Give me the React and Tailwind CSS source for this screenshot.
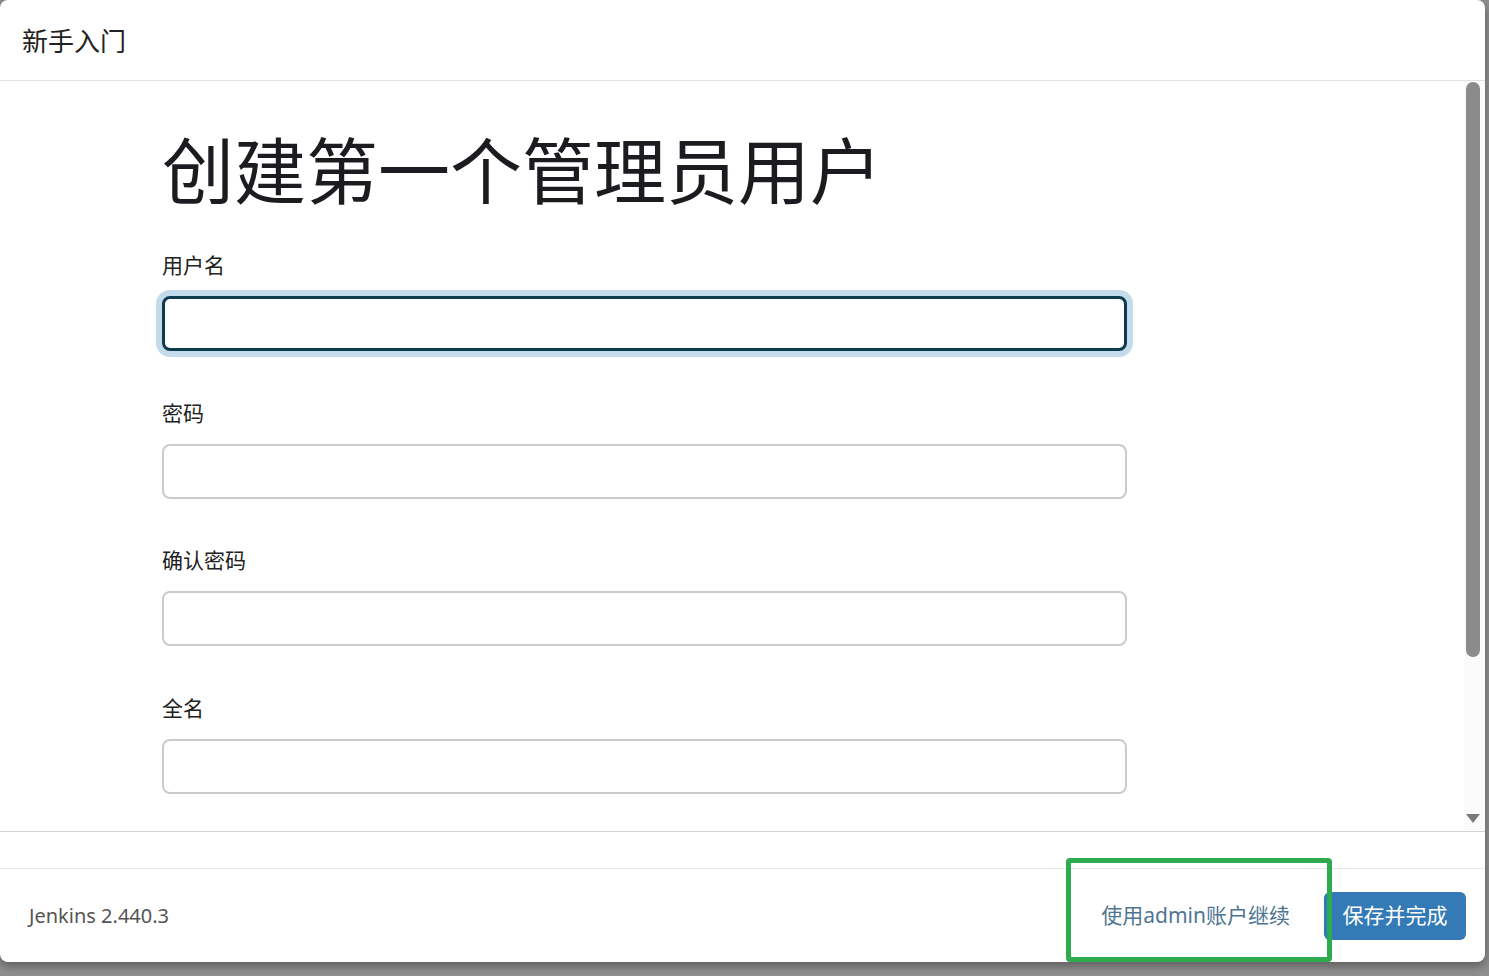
const font = { fontFamily: '"Noto Sans", "Noto Sans CJK SC", sans-serif' };

const Field = ({ label, focused }) => (
  <div className="flex flex-col">
    <label className="h-[28px] text-[21px] leading-[28px] text-[#222]">{label}</label>
    <input
      className={
        focused
          ? 'mt-[17px] h-[55px] w-[965px] rounded-lg border-[3px] border-[#0f3b4e] bg-white shadow-[0_0_0_6px_#c3dbea] outline-none'
          : 'mt-[17px] h-[55px] w-[965px] rounded-lg border-2 border-[#c9cbcc] bg-white outline-none'
      }
    />
  </div>
);

export default function App() {
  return (
    <div className="h-[976px] w-[1489px] overflow-hidden bg-[#8e8e8e]" style={font}>
      <div className="relative flex h-[962px] w-[1485px] flex-col rounded-lg bg-white shadow-[0_4px_10px_rgba(0,0,0,0.35)]">
        <div className="flex h-[81px] shrink-0 items-center border-b border-[#e3e3e3] px-[22px] pt-[3px] text-[26px] text-[#222]">
          新手入门
        </div>

        <div className="flex h-[751px] shrink-0 border-b border-[#d2d2d2]">
          <div className="flex-1 overflow-hidden pl-[162px] pt-[49px]">
            <h1 className="h-[80px] text-[72px] leading-[80px] text-[#1b1b20]">创建第一个管理员用户</h1>
            <div className="mt-[41px] flex flex-col gap-[47.5px]">
              <Field label="用户名" focused />
              <Field label="密码" />
              <Field label="确认密码" />
              <Field label="全名" />
            </div>
          </div>
          <div className="flex w-[21px] flex-col items-center bg-[#fbfbfb] pt-px pb-[8px] pr-[4px]">
            <div className="h-[575px] w-[14px] rounded-full bg-[#8b8b8b]" />
            <div className="flex-1" />
            <svg width="14" height="9" viewBox="0 0 14 9">
              <path d="M0 0 H14 L7 9 Z" fill="#7a7a7a" />
            </svg>
          </div>
        </div>

        <div className="h-[37px] shrink-0 border-b border-[#e6e6e6]" />

        <div className="flex flex-1 items-center justify-between pl-[29px] pr-[19px]">
          <span className="text-[20px] text-[#555]">Jenkins 2.440.3</span>
          <div className="flex items-center gap-[34px]">
            <span className="text-[21px] text-[#4f7592]">使用admin账户继续</span>
            <button className="h-[48px] w-[142px] rounded-md bg-[#337ab7] text-[21px] text-white">保存并完成</button>
          </div>
        </div>

        <div className="pointer-events-none absolute left-[1066px] top-[858px] z-10 h-[104px] w-[266px] rounded-sm border-[5px] border-[#2eaa4f]" />
      </div>
    </div>
  );
}
